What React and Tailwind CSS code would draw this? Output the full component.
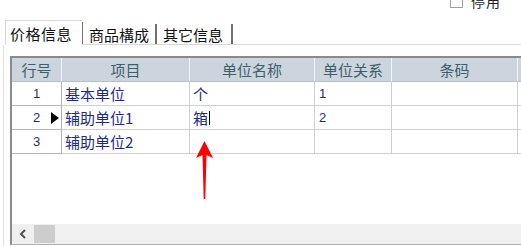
import React from "react";

const cols = [50, 128, 125, 77, 126];
const headers = ["行号", "项目", "单位名称", "单位关系", "条码"];
const rows = [
  { n: "1", item: "基本单位", name: "个", rel: "1", cur: false },
  { n: "2", item: "辅助单位1", name: "箱", rel: "2", cur: true },
  { n: "3", item: "辅助单位2", name: "", rel: "", cur: false },
];

export default function App() {
  return (
    <div className="relative w-[521px] h-[246px] overflow-hidden bg-white font-['Noto_Sans_CJK_SC',sans-serif] text-[14px] leading-none">
      {/* top bar */}
      <div className="h-[20px] flex justify-end items-start pr-[20px]">
        <div className="-mt-[6px] flex items-center gap-[8px]">
          <div className="w-[13px] h-[13px] border border-[#a0a0a0] bg-white"></div>
          <span className="text-[14px] text-[#222] tracking-[1px]">停用</span>
        </div>
      </div>
      {/* tabs */}
      <div className="h-[25px] flex items-end">
        <div className="ml-[5px] h-[25px] w-[77px] border-l border-t border-[#d8d8d8] bg-white flex items-center pl-[4px] text-[15px] text-[#111] tracking-[0.5px]">
          价格信息
        </div>
        <div className="flex-1 h-[25px] flex flex-col">
          <div className="flex-1 flex items-end">
            <div className="w-[1px] h-[22px] bg-[#707070]"></div>
            <div className="w-[72px] h-[20px] flex items-center pl-[6px] text-[15px] text-[#111]">商品構成</div>
            <div className="w-[2px] h-[20px] bg-[#707070]"></div>
            <div className="w-[74px] h-[20px] flex items-center pl-[6px] text-[15px] text-[#111]">其它信息</div>
            <div className="w-[2px] h-[20px] bg-[#707070]"></div>
          </div>
          <div className="h-[1px] bg-[#d8d8d8]"></div>
        </div>
      </div>
      {/* panel */}
      <div className="ml-[3px] h-[201px] border-l border-[#e0e0e0] pl-[6px] pt-[11px]">
        <div className="h-[189px] border-l-2 border-t-2 border-b border-l-[#8a8a8a] border-t-[#8a8a8a] border-b-[#b0b0b0] flex flex-col">
          {/* header */}
          <div className="h-[24px] flex">
            {headers.map((h, i) => (
              <div
                key={h}
                style={{ width: cols[i] }}
                className="h-[24px] bg-[#ccd4de] border-r border-b border-r-[#f2f4f7] border-b-[#b8bec6] flex items-center justify-center text-[15px] text-[#3e5e6c]"
              >
                {h}
              </div>
            ))}
            <div className="flex-1 h-[24px] bg-[#ccd4de] border-b border-[#b8bec6]"></div>
          </div>
          {rows.map((r) => (
            <div key={r.n} className="h-[24px] flex text-[#1f2d78]">
              <div
                style={{ width: cols[0] }}
                className="h-[24px] border-r border-b border-[#b4b4b4] flex items-center pl-[21px] text-[13px] font-['Liberation_Sans',sans-serif]"
              >
                <span className="w-[14px]">{r.n}</span>
                {r.cur && (
                  <svg width="8" height="12" viewBox="0 0 8 12" className="ml-[4px]">
                    <polygon points="0,0 8,6 0,12" fill="#000" />
                  </svg>
                )}
              </div>
              <div
                style={{ width: cols[1] }}
                className="h-[24px] border-r border-b border-[#d0d0d0] flex items-center pl-[3px] text-[15px]"
              >
                {r.item}
              </div>
              <div
                style={{ width: cols[2] }}
                className="h-[24px] border-r border-b border-[#d0d0d0] flex items-center pl-[3px] text-[15px]"
              >
                {r.name}
                {r.cur && <span className="ml-[1px] w-[1px] h-[14px] bg-black"></span>}
              </div>
              <div
                style={{ width: cols[3] }}
                className="h-[24px] border-r border-b border-[#d0d0d0] flex items-center pl-[4px] text-[13px] font-['Liberation_Sans',sans-serif]"
              >
                {r.rel}
              </div>
              <div
                style={{ width: cols[4] }}
                className="h-[24px] border-r border-b border-[#d0d0d0]"
              ></div>
              <div className="flex-1 h-[24px] border-b border-[#d0d0d0]"></div>
            </div>
          ))}
          <div className="flex-1"></div>
          {/* scrollbar */}
          <div className="h-[20px] bg-[#f0f0f0] flex items-center">
            <div className="w-[22px] h-[20px] flex items-center justify-center">
              <svg width="8" height="10" viewBox="0 0 8 10">
                <polyline points="6,1 2,5 6,9" fill="none" stroke="#505050" strokeWidth="2" />
              </svg>
            </div>
            <div className="w-[21px] h-[18px] bg-[#cdcdcd]"></div>
          </div>
        </div>
      </div>
      {/* red arrow */}
      <svg className="absolute left-[196px] top-[141px]" width="17" height="60" viewBox="0 0 17 60">
        <polygon points="8.5,0 0,17 6.5,14 7.7,58 9.3,58 10.5,14 17,17" fill="#ff0000" />
      </svg>
    </div>
  );
}
